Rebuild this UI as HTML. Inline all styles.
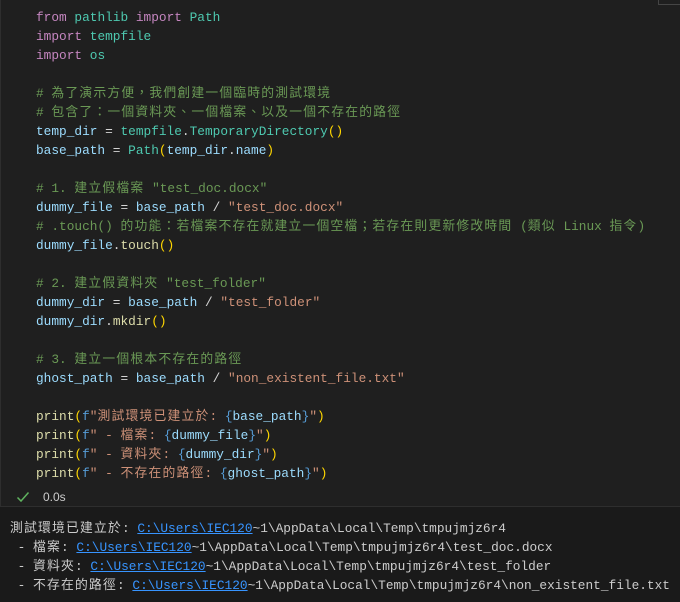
<!DOCTYPE html>
<html><head><meta charset="utf-8"><style>
body{margin:0;width:680px;height:602px;background:#1a1a1a;overflow:hidden;font-family:"Liberation Mono","Noto Sans CJK TC",monospace;}
.cell{position:absolute;left:0;top:0;width:680px;height:507px;background:#1f1f1f;border-left:1px solid #2e2e2e;border-bottom:1px solid #2e2e2e;box-sizing:border-box;}
.code{position:absolute;left:35px;top:8px;font-size:12.8px;line-height:19px;white-space:pre;color:#d4d4d4;}
.c{font-family:"Noto Sans CJK TC",sans-serif;letter-spacing:1.2px;line-height:0}
.k{color:#c586c0}.m{color:#4ec9b0}.v{color:#9cdcfe}.g{color:#6a9955}.s{color:#ce9178}.y{color:#ffd700}.f{color:#dcdcaa}.b{color:#569cd6}.p{color:#da70d6}
.out{position:absolute;left:10px;top:519px;font-size:12.8px;line-height:19px;white-space:pre;color:#cccccc;}
a{color:#3794ff;text-decoration:underline}
.tb{position:absolute;left:657px;top:-1px;width:24px;height:4px;border:1px solid #454545;}
</style></head><body>
<div class="cell">
<div class="tb"></div>
<div class="code"><span class="k">from</span> <span class="m">pathlib</span> <span class="k">import</span> <span class="m">Path</span>
<span class="k">import</span> <span class="m">tempfile</span>
<span class="k">import</span> <span class="m">os</span>

<span class="g"># <span class="c">為了演示方便，我們創建一個臨時的測試環境</span></span>
<span class="g"># <span class="c">包含了：一個資料夾、一個檔案、以及一個不存在的路徑</span></span>
<span class="v">temp_dir</span> = <span class="m">tempfile</span>.<span class="m">TemporaryDirectory</span><span class="y">()</span>
<span class="v">base_path</span> = <span class="m">Path</span><span class="y">(</span><span class="v">temp_dir</span>.<span class="v">name</span><span class="y">)</span>

<span class="g"># 1. <span class="c">建立假檔案</span> "test_doc.docx"</span>
<span class="v">dummy_file</span> = <span class="v">base_path</span> / <span class="s">"test_doc.docx"</span>
<span class="g"># .touch() <span class="c">的功能：若檔案不存在就建立一個空檔；若存在則更新修改時間</span> (<span class="c">類似</span> Linux <span class="c">指令</span>)</span>
<span class="v">dummy_file</span>.<span class="f">touch</span><span class="y">()</span>

<span class="g"># 2. <span class="c">建立假資料夾</span> "test_folder"</span>
<span class="v">dummy_dir</span> = <span class="v">base_path</span> / <span class="s">"test_folder"</span>
<span class="v">dummy_dir</span>.<span class="f">mkdir</span><span class="y">()</span>

<span class="g"># 3. <span class="c">建立一個根本不存在的路徑</span></span>
<span class="v">ghost_path</span> = <span class="v">base_path</span> / <span class="s">"non_existent_file.txt"</span>

<span class="f">print</span><span class="y">(</span><span class="b">f</span><span class="s">"<span class="c">測試環境已建立於</span>: </span><span class="b">{</span><span class="v">base_path</span><span class="b">}</span><span class="s">"</span><span class="y">)</span>
<span class="f">print</span><span class="y">(</span><span class="b">f</span><span class="s">" - <span class="c">檔案</span>: </span><span class="b">{</span><span class="v">dummy_file</span><span class="b">}</span><span class="s">"</span><span class="y">)</span>
<span class="f">print</span><span class="y">(</span><span class="b">f</span><span class="s">" - <span class="c">資料夾</span>: </span><span class="b">{</span><span class="v">dummy_dir</span><span class="b">}</span><span class="s">"</span><span class="y">)</span>
<span class="f">print</span><span class="y">(</span><span class="b">f</span><span class="s">" - <span class="c">不存在的路徑</span>: </span><span class="b">{</span><span class="v">ghost_path</span><span class="b">}</span><span class="s">"</span><span class="y">)</span></div>
<svg style="position:absolute;left:15px;top:491px" width="14" height="12" viewBox="0 0 14 12"><path d="M1.5 6.5 L5 10 L12.5 1.5" stroke="#5fb35f" stroke-width="1.5" fill="none"/></svg>
<div style="position:absolute;left:42px;top:490px;font-family:'Liberation Sans',sans-serif;font-size:12px;color:#cccccc">0.0s</div>
</div>
<div class="out"><span class="c">測試環境已建立於</span>: <a>C:\Users\IEC120</a>~1\AppData\Local\Temp\tmpujmjz6r4
 - <span class="c">檔案</span>: <a>C:\Users\IEC120</a>~1\AppData\Local\Temp\tmpujmjz6r4\test_doc.docx
 - <span class="c">資料夾</span>: <a>C:\Users\IEC120</a>~1\AppData\Local\Temp\tmpujmjz6r4\test_folder
 - <span class="c">不存在的路徑</span>: <a>C:\Users\IEC120</a>~1\AppData\Local\Temp\tmpujmjz6r4\non_existent_file.txt</div>
</body></html>
